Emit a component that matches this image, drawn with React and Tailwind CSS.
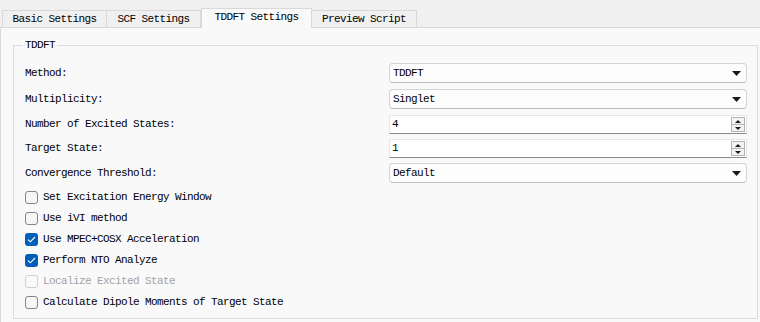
import React from "react";

const tabs = [
  { name: "Basic Settings", w: "w-[105px]" },
  { name: "SCF Settings", w: "w-[95px]" },
  { name: "TDDFT Settings", w: "w-[111px]", active: true },
  { name: "Preview Script", w: "w-[106px]" },
];

const checks = [
  { label: "Set Excitation Energy Window" },
  { label: "Use iVI method" },
  { label: "Use MPEC+COSX Acceleration", checked: true },
  { label: "Perform NTO Analyze", checked: true },
  { label: "Localize Excited State", disabled: true },
  { label: "Calculate Dipole Moments of Target State" },
];

function Combo({ value, className = "" }) {
  return (
    <div
      className={`flex h-[20px] items-center justify-between rounded-[4px] border border-[#d3d3d3] border-b-[#bdbdbd] bg-[#fdfdfd] pl-[3px] pr-[5px] ${className}`}
    >
      <span>{value}</span>
      <svg width="9" height="5" viewBox="0 0 9 5">
        <polygon points="0,0 9,0 4.5,5" fill="#1a1a1a" />
      </svg>
    </div>
  );
}

function Spin({ value, className = "" }) {
  return (
    <div
      className={`flex h-[19px] items-center justify-between border border-[#e6e6e6] border-b-[#8a8a8a] bg-white pl-[2px] pr-[1px] ${className}`}
    >
      <span>{value}</span>
      <div className="flex h-[15px] w-[14px] flex-col border border-[#b4b4b4] bg-[#f3f3f3]">
        <div className="flex flex-1 items-center justify-center border-b border-[#b4b4b4]">
          <svg width="6" height="3" viewBox="0 0 6 3">
            <polygon points="0,3 6,3 3,0" fill="#1a1a1a" />
          </svg>
        </div>
        <div className="flex flex-1 items-center justify-center">
          <svg width="6" height="3" viewBox="0 0 6 3">
            <polygon points="0,0 6,0 3,3" fill="#1a1a1a" />
          </svg>
        </div>
      </div>
    </div>
  );
}

function Check({ label, checked, disabled }) {
  return (
    <div className="flex h-[21px] items-center">
      {checked ? (
        <div className="flex h-[13px] w-[13px] items-center justify-center rounded-[3px] bg-[#005fb8]">
          <svg width="9" height="7" viewBox="0 0 9 7">
            <polyline
              points="1,3.6 3.3,5.8 8,1"
              fill="none"
              stroke="#fff"
              strokeWidth="1.1"
            />
          </svg>
        </div>
      ) : (
        <div
          className={`h-[13px] w-[13px] rounded-[3px] border ${
            disabled
              ? "border-[#cfcfcf] bg-[#f9f9f9]"
              : "border-[#858585] bg-[#f6f6f6]"
          }`}
        />
      )}
      <span className={`ml-[5px] ${disabled ? "text-[#a3a3a3]" : "text-black"}`}>
        {label}
      </span>
    </div>
  );
}

export default function App() {
  return (
    <div className="h-[322px] w-[760px] overflow-hidden bg-[#f0f0f0] [font-family:'Liberation_Mono','Courier_New',monospace] text-[11px] leading-none tracking-[-0.6px] text-black">
      {/* Tabs */}
      <div className="flex h-[27px] items-end pl-[2px]">
        {tabs.map((t) =>
          t.active ? (
            <div
              key={t.name}
              className={`${t.w} relative z-10 -mb-px flex h-[20px] items-center justify-center border border-b-0 border-[#d9d9d9] bg-[#f9f9f9] pb-[2px]`}
            >
              {t.name}
            </div>
          ) : (
            <div
              key={t.name}
              className={`${t.w} -ml-px flex h-[17px] items-center justify-center border border-b-0 border-[#d9d9d9] bg-[#f0f0f0] first:ml-0`}
            >
              {t.name}
            </div>
          )
        )}
      </div>

      {/* Panel */}
      <div className="h-[296px] w-[770px] border-l border-t border-[#d9d9d9] bg-[#f9f9f9] pl-[12px] pt-[17px]">
        <div className="relative w-[745px] border border-[#dcdcdc] pb-[5px] pl-[11px] pr-[10px] pt-[17px]">
          <div className="absolute left-[9px] top-[-6px] bg-[#f9f9f9] px-[2px]">TDDFT</div>

          <div className="grid grid-cols-[364px_1fr] items-center">
            <span>Method:</span>
            <Combo value="TDDFT" />
            <span className="mt-[6px]">Multiplicity:</span>
            <Combo value="Singlet" className="mt-[6px]" />
            <span className="mt-[6px]">Number of Excited States:</span>
            <Spin value="4" className="mt-[6px]" />
            <span className="mt-[5px]">Target State:</span>
            <Spin value="1" className="mt-[5px]" />
            <span className="mt-[5px]">Convergence Threshold:</span>
            <Combo value="Default" className="mt-[5px]" />
          </div>

          <div className="mt-[4px] flex flex-col">
            {checks.map((c) => (
              <Check key={c.label} {...c} />
            ))}
          </div>
        </div>
      </div>
    </div>
  );
}
